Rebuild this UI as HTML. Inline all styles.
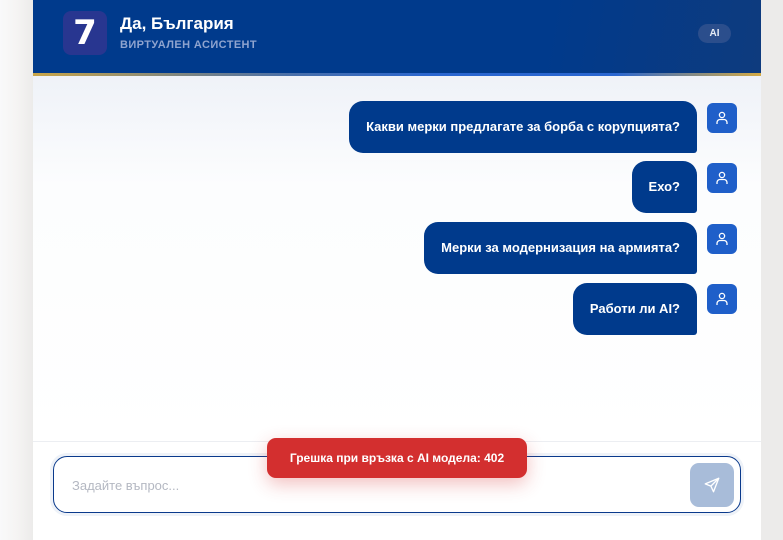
<!DOCTYPE html>
<html><head><meta charset="utf-8"><style>
*{box-sizing:border-box;margin:0;padding:0}
html,body{width:783px;height:540px;overflow:hidden}
body{background:linear-gradient(90deg,#f9f9fa 0,#f5f4f3 17px,#ecebea 33px,#ecebea 100%);font-family:"Liberation Sans","DejaVu Sans",sans-serif;position:relative}
.card{position:absolute;left:33px;top:0;width:728px;height:540px;background:#fff;overflow:hidden}
.hdr{position:absolute;left:0;top:0;width:728px;height:73px;background:linear-gradient(100deg,#003a8c 0,#003a8c 70%,#0e3b7e 100%)}
.line{position:absolute;left:0;top:73px;width:728px;height:3px;background:linear-gradient(90deg,#c9a548 0,#4a6fa8 35%,#2a66d0 55%,#2a66d0 80%,#d4aa44 100%)}
.logo{position:absolute;left:30px;top:11px;width:44px;height:44px;border-radius:8px;background:#283690;color:#fff;font-weight:bold;font-size:34px;text-align:center;line-height:44px;font-family:"DejaVu Sans",sans-serif}
.t1{position:absolute;left:87px;top:14px;color:#fff;font-weight:bold;font-size:17px}
.t2{position:absolute;left:87px;top:39px;color:#8fa4cf;font-weight:bold;font-size:11px;letter-spacing:.4px}
.ai{position:absolute;left:665px;top:24px;width:33px;height:19px;border-radius:10px;background:#2b4e8c;color:#e6ecf6;font-size:10px;font-weight:bold;text-align:center;line-height:19px}
.body{position:absolute;left:0;top:76px;width:728px;height:365px;background:linear-gradient(180deg,#eff2f8 0,#fcfdfe 110px,#fff 100%)}
.b{position:absolute;right:64px;height:52px;background:#003a8c;color:#fff;border-radius:14px 14px 3px 14px;font-size:13px;font-weight:bold;line-height:52px;padding:0 17px}
.av{position:absolute;left:674px;width:30px;height:30px;border-radius:6px;background:#1f5fc9}
.av svg{position:absolute;left:7px;top:7px}
.div{position:absolute;left:0;top:441px;width:728px;height:1px;background:#eceef2}
.inp{position:absolute;left:20px;top:456px;width:688px;height:57px;border:1.5px solid #0a3a8c;border-radius:14px;box-shadow:0 0 0 3px #eef2f8}
.ph{position:absolute;left:18px;top:21px;color:#b4b8c2;font-size:13px}
.send{position:absolute;left:636px;top:6px;width:44px;height:44px;border-radius:9px;background:#a8bcd9}
.toast{position:absolute;left:234px;top:438px;width:260px;height:40px;border-radius:9px;background:#d32f2f;color:#fff;font-size:12px;font-weight:bold;text-align:center;line-height:40px;box-shadow:0 6px 18px rgba(211,47,47,.3)}
</style></head><body>
<div class="card">
<div class="hdr"></div><div class="line"></div>
<div class="logo">7</div>
<div class="t1">Да, България</div>
<div class="t2">ВИРТУАЛЕН АСИСТЕНТ</div>
<div class="ai">AI</div>
<div class="body"></div>
<div class="b" style="top:101px">Какви мерки предлагате за борба с корупцията?</div>
<div class="b" style="top:161px">Ехо?</div>
<div class="b" style="top:222px">Мерки за модернизация на армията?</div>
<div class="b" style="top:283px">Работи ли AI?</div>
<div class="av" style="top:103px"><svg width="16" height="16" viewBox="0 0 16 16" fill="none" stroke="#fff" stroke-width="1.3"><circle cx="8" cy="5" r="2.6"/><path d="M3 14v-1.5a3 3 0 0 1 3-3h4a3 3 0 0 1 3 3V14"/></svg></div>
<div class="av" style="top:163px"><svg width="16" height="16" viewBox="0 0 16 16" fill="none" stroke="#fff" stroke-width="1.3"><circle cx="8" cy="5" r="2.6"/><path d="M3 14v-1.5a3 3 0 0 1 3-3h4a3 3 0 0 1 3 3V14"/></svg></div>
<div class="av" style="top:224px"><svg width="16" height="16" viewBox="0 0 16 16" fill="none" stroke="#fff" stroke-width="1.3"><circle cx="8" cy="5" r="2.6"/><path d="M3 14v-1.5a3 3 0 0 1 3-3h4a3 3 0 0 1 3 3V14"/></svg></div>
<div class="av" style="top:284px"><svg width="16" height="16" viewBox="0 0 16 16" fill="none" stroke="#fff" stroke-width="1.3"><circle cx="8" cy="5" r="2.6"/><path d="M3 14v-1.5a3 3 0 0 1 3-3h4a3 3 0 0 1 3 3V14"/></svg></div>
<div class="div"></div>
<div class="inp"><div class="ph">Задайте въпрос...</div>
<div class="send"><svg style="position:absolute;left:13px;top:13px" width="18" height="18" viewBox="0 0 24 24" fill="none" stroke="#fff" stroke-width="1.8" stroke-linejoin="round"><path d="M21 3 3 10.5l7.5 3L14 21z"/><path d="M21 3 10.5 13.5"/></svg></div></div>
<div class="toast">Грешка при връзка с AI модела: 402</div>
</div>
</body></html>
